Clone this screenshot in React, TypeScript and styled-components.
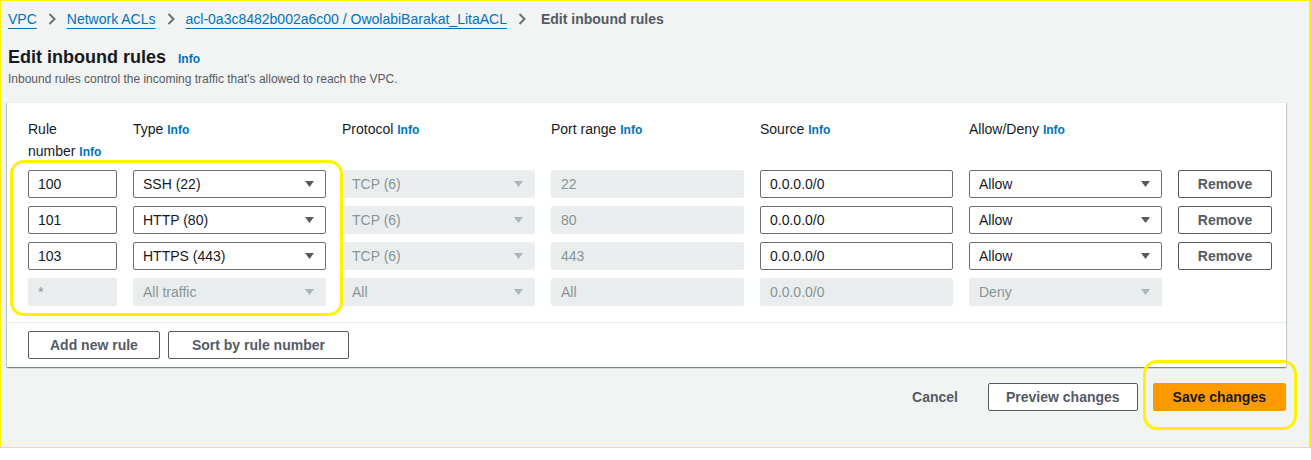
import React from "react";
import styled, { createGlobalStyle } from "styled-components";

const GlobalStyle = createGlobalStyle`
  html, body { margin: 0; padding: 0; background: #ffffff; }
  body { font-family: "Liberation Sans", Arial, sans-serif; color: #16191f; }
  * { box-sizing: border-box; }
`;

const YELLOW = "#fff200";

const Frame = styled.div`
  width: 1311px;
  height: 448px;
  background: #f2f3f3;
  border-top: 1px solid ${YELLOW};
  border-bottom: 1px solid ${YELLOW};
  border-left: 1px solid ${YELLOW};
  border-right: 2px solid ${YELLOW};
  padding: 8px 23px 0 6px;
`;

const Crumbs = styled.nav`
  display: flex;
  align-items: center;
  gap: 11px;
  height: 20px;
  padding-left: 1px;
  font-size: 14px;
  line-height: 20px;
`;

const CrumbLink = styled.a`
  color: #0073bb;
  text-decoration: underline;
  text-underline-offset: 4px;
  text-decoration-thickness: 1px;
`;

const CrumbCurrent = styled.span`
  color: #545b64;
  font-weight: 700;
  margin-left: 4px;
`;

const Chevron = styled.svg`
  width: 8px;
  height: 12px;
  flex: none;
`;

const TitleRow = styled.div`
  display: flex;
  align-items: baseline;
  gap: 12px;
  margin-top: 16px;
  padding-left: 1px;
  line-height: 24px;
`;

const Title = styled.h1`
  margin: 0;
  font-size: 18px;
  font-weight: 700;
  color: #16191f;
`;

const Info = styled.a<{ $size?: number }>`
  color: #0073bb;
  font-weight: 700;
  font-size: ${(p) => p.$size ?? 12}px;
  text-decoration: none;
`;

const Description = styled.p`
  margin: 0;
  padding-left: 1px;
  font-size: 12px;
  line-height: 16px;
  color: #545b64;
`;

const Card = styled.section`
  position: relative;
  margin-top: 15px;
  background: #ffffff;
  border-top: 1px solid #eaeded;
  box-shadow: 0 1px 1px 0 rgba(0, 28, 36, 0.3), 1px 1px 1px 0 rgba(0, 28, 36, 0.15),
    -1px 1px 1px 0 rgba(0, 28, 36, 0.15);
`;

const RulesGrid = styled.div`
  display: grid;
  grid-template-columns: 89px 193px 193px 193px 193px 193px 94px;
  column-gap: 16px;
  row-gap: 8px;
  padding: 14px 21px 16px 21px;
`;

const HeadCell = styled.div`
  padding-top: 1px;
  height: 45px;
  font-size: 14px;
  line-height: 22px;
  color: #16191f;
`;

const Field = styled.div<{ $disabled?: boolean }>`
  display: flex;
  align-items: center;
  justify-content: space-between;
  height: 28px;
  padding: 0 11px 0 9px;
  font-size: 14px;
  border-radius: 2px;
  border: 1px solid ${(p) => (p.$disabled ? "#eaeded" : "#687078")};
  background: ${(p) => (p.$disabled ? "#eaeded" : "#ffffff")};
  color: ${(p) => (p.$disabled ? "#879596" : "#16191f")};
`;

const Caret = styled.svg<{ $disabled?: boolean }>`
  width: 9px;
  height: 6px;
  flex: none;
  fill: ${(p) => (p.$disabled ? "#aab7b8" : "#545b64")};
`;

const Button = styled.button<{ $primary?: boolean; $px?: number }>`
  height: 28px;
  padding: 0 ${(p) => p.$px ?? 20}px;
  font-family: inherit;
  font-size: 14px;
  font-weight: 700;
  border-radius: 2px;
  border: 1px solid ${(p) => (p.$primary ? "#ff9900" : "#545b64")};
  background: ${(p) => (p.$primary ? "#ff9900" : "#ffffff")};
  color: ${(p) => (p.$primary ? "#16191f" : "#545b64")};
  white-space: nowrap;
  cursor: pointer;
`;

const RemoveButton = styled(Button)`
  width: 94px;
  padding: 0;
`;

const LinkButton = styled.button`
  height: 28px;
  padding: 0 22px;
  font-family: inherit;
  font-size: 14px;
  font-weight: 700;
  border: none;
  background: transparent;
  color: #545b64;
`;

const CardFooter = styled.div`
  display: flex;
  gap: 8px;
  padding: 8px 21px;
  border-top: 1px solid #eaeded;
`;

const PageActions = styled.div`
  display: flex;
  justify-content: flex-end;
  align-items: center;
  gap: 8px;
  margin-top: 16px;
`;

const SaveWrap = styled.span`
  position: relative;
  display: inline-flex;
  margin-left: 7px;
`;

const Highlight = styled.span<{ $top: number; $left: number; $w: number; $h: number }>`
  position: absolute;
  top: ${(p) => p.$top}px;
  left: ${(p) => p.$left}px;
  width: ${(p) => p.$w}px;
  height: ${(p) => p.$h}px;
  border: 3px solid ${YELLOW};
  border-radius: 14px;
  pointer-events: none;
  z-index: 2;
`;

const ChevronIcon = () => (
  <Chevron viewBox="0 0 8 12">
    <path d="M1.5 1 L6.5 6 L1.5 11" fill="none" stroke="#687078" strokeWidth="2" />
  </Chevron>
);

const CaretIcon = ({ disabled }: { disabled?: boolean }) => (
  <Caret viewBox="0 0 9 6" $disabled={disabled}>
    <path d="M0 0 H9 L4.5 6 Z" />
  </Caret>
);

type Rule = {
  num: string;
  type: string;
  protocol: string;
  port: string;
  source: string;
  action: string;
  locked?: boolean;
};

const rules: Rule[] = [
  { num: "100", type: "SSH (22)", protocol: "TCP (6)", port: "22", source: "0.0.0.0/0", action: "Allow" },
  { num: "101", type: "HTTP (80)", protocol: "TCP (6)", port: "80", source: "0.0.0.0/0", action: "Allow" },
  { num: "103", type: "HTTPS (443)", protocol: "TCP (6)", port: "443", source: "0.0.0.0/0", action: "Allow" },
  { num: "*", type: "All traffic", protocol: "All", port: "All", source: "0.0.0.0/0", action: "Deny", locked: true },
];

export default function App() {
  return (
    <>
      <GlobalStyle />
      <Frame>
        <Crumbs>
          <CrumbLink>VPC</CrumbLink>
          <ChevronIcon />
          <CrumbLink>Network ACLs</CrumbLink>
          <ChevronIcon />
          <CrumbLink>acl-0a3c8482b002a6c00 / OwolabiBarakat_LitaACL</CrumbLink>
          <ChevronIcon />
          <CrumbCurrent>Edit inbound rules</CrumbCurrent>
        </Crumbs>
        <TitleRow>
          <Title>Edit inbound rules</Title>
          <Info>Info</Info>
        </TitleRow>
        <Description>Inbound rules control the incoming traffic that's allowed to reach the VPC.</Description>

        <Card>
          <Highlight $top={57} $left={3} $w={333} $h={156} />
          <RulesGrid>
            <HeadCell>
              Rule
              <br />
              number <Info>Info</Info>
            </HeadCell>
            <HeadCell>
              Type <Info>Info</Info>
            </HeadCell>
            <HeadCell>
              Protocol <Info>Info</Info>
            </HeadCell>
            <HeadCell>
              Port range <Info>Info</Info>
            </HeadCell>
            <HeadCell>
              Source <Info>Info</Info>
            </HeadCell>
            <HeadCell>
              Allow/Deny <Info>Info</Info>
            </HeadCell>
            <HeadCell />
            {rules.map((r) => (
              <React.Fragment key={r.num}>
                <Field $disabled={r.locked}>{r.num}</Field>
                <Field $disabled={r.locked}>
                  {r.type}
                  <CaretIcon disabled={r.locked} />
                </Field>
                <Field $disabled>
                  {r.protocol}
                  <CaretIcon disabled />
                </Field>
                <Field $disabled>{r.port}</Field>
                <Field $disabled={r.locked}>{r.source}</Field>
                <Field $disabled={r.locked}>
                  {r.action}
                  <CaretIcon disabled={r.locked} />
                </Field>
                {r.locked ? <div /> : <RemoveButton>Remove</RemoveButton>}
              </React.Fragment>
            ))}
          </RulesGrid>
          <CardFooter>
            <Button $px={21}>Add new rule</Button>
            <Button $px={23}>Sort by rule number</Button>
          </CardFooter>
        </Card>

        <PageActions>
          <LinkButton>Cancel</LinkButton>
          <Button $px={17}>Preview changes</Button>
          <SaveWrap>
            <Highlight $top={-23} $left={-10} $w={154} $h={70} />
            <Button $primary $px={19}>Save changes</Button>
          </SaveWrap>
        </PageActions>
      </Frame>
    </>
  );
}
